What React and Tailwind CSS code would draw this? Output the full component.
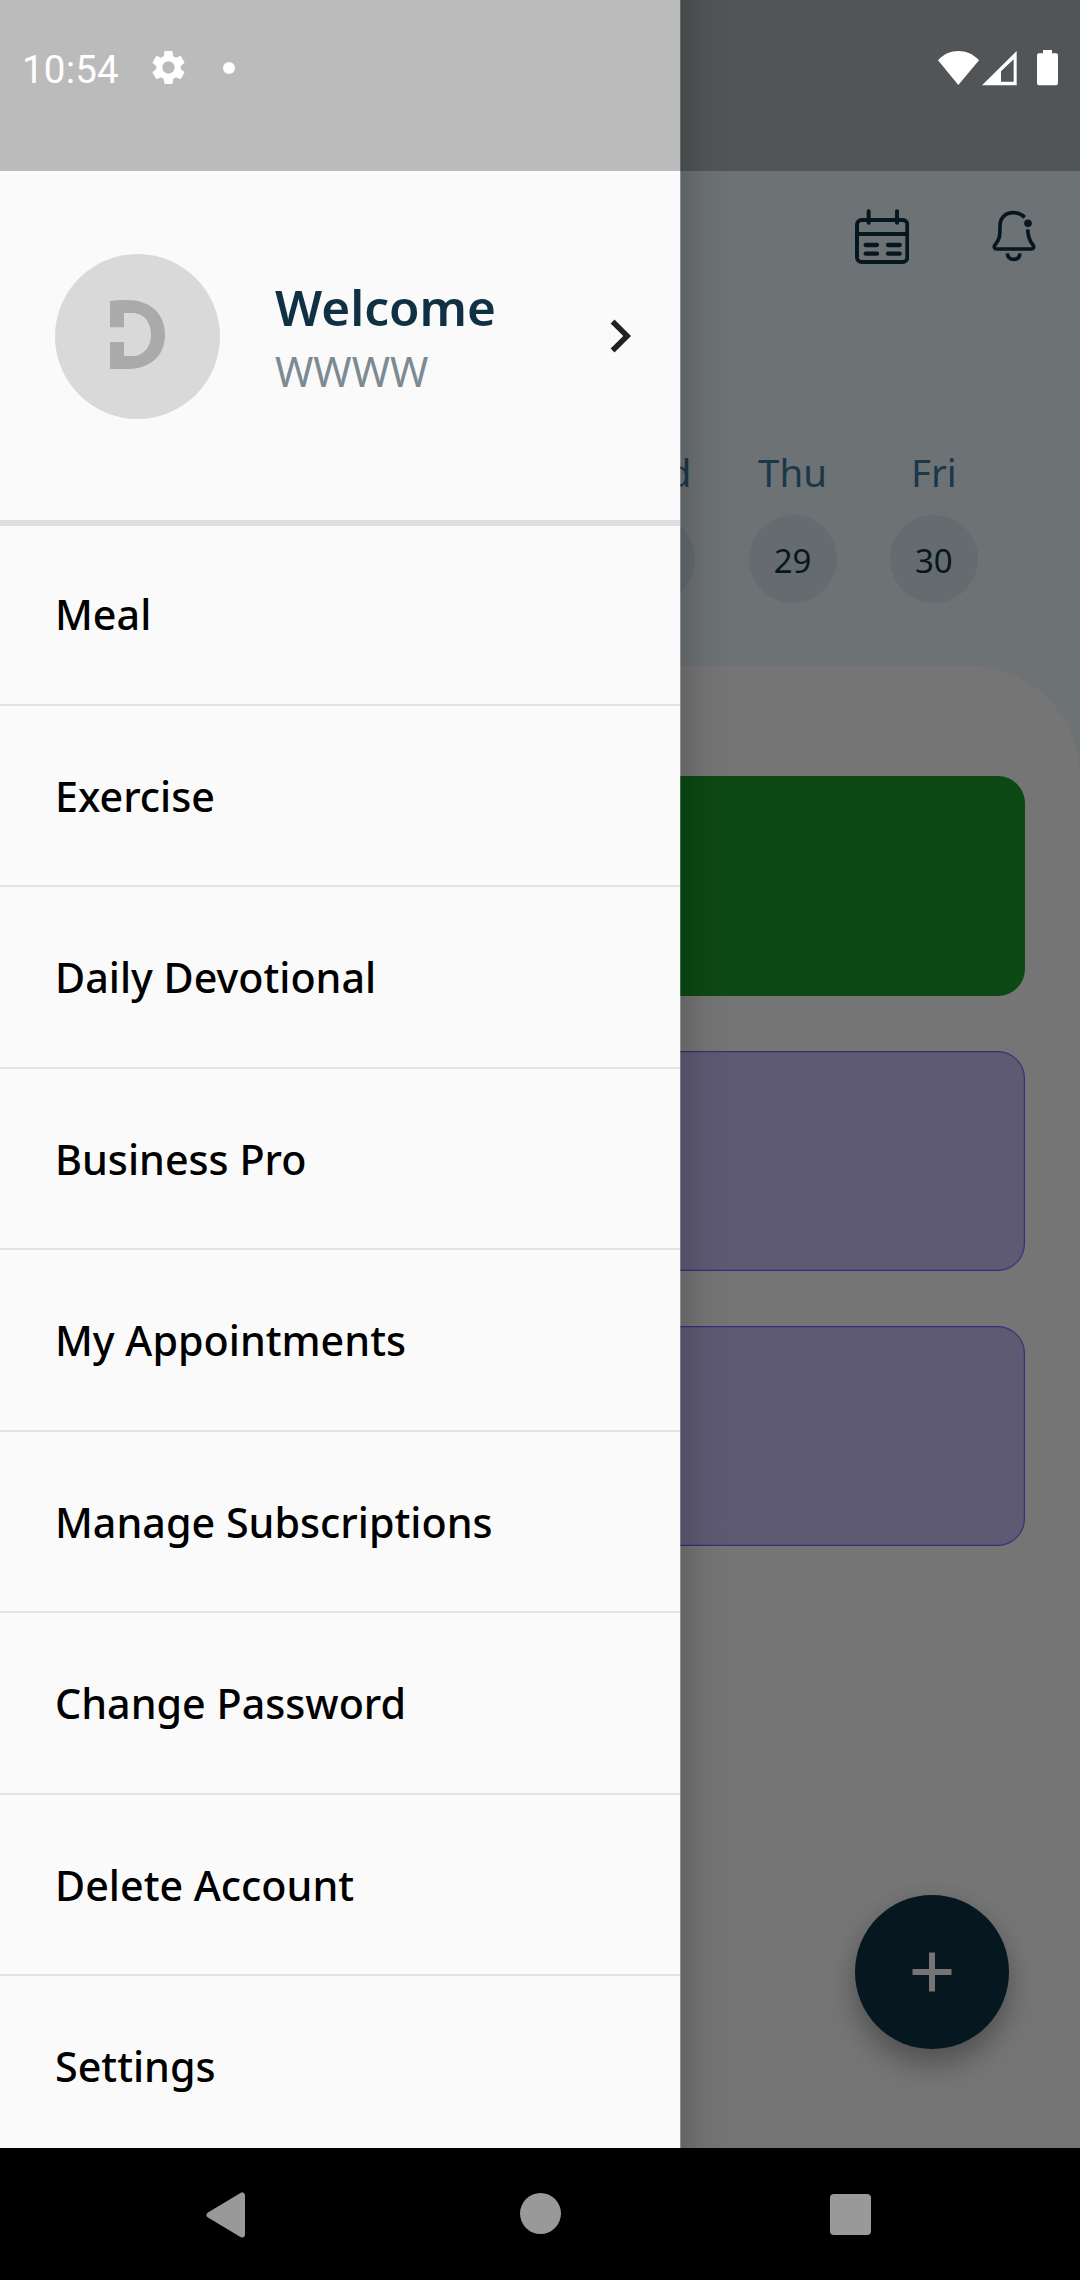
import { MdSettings } from "react-icons/md";

const items = [
  "Meal",
  "Exercise",
  "Daily Devotional",
  "Business Pro",
  "My Appointments",
  "Manage Subscriptions",
  "Change Password",
  "Delete Account",
  "Settings",
];

const days = [
  { name: "Wed", date: "28" },
  { name: "Thu", date: "29" },
  { name: "Fri", date: "30" },
];

function CalendarIcon() {
  return (
    <svg className="h-[56px] w-[54px]" viewBox="0 0 162 168" fill="none" stroke="#07171f" strokeWidth="12" strokeLinecap="round">
      <rect x="6" y="33" width="151" height="126" rx="14" />
      <path d="M6 75H157M41 7v34M126 7v34" />
      <path d="M32 108H66M99 108H134M32 134H66M99 134H134" strokeWidth="13" />
    </svg>
  );
}

function BellIcon() {
  return (
    <svg className="h-[54px] w-[44px]" viewBox="0 0 132 162" fill="none" stroke="#07171f" strokeWidth="11" strokeLinecap="butt" strokeLinejoin="round">
      <path d="M98 25C88 15 76 11 64 11C40 11 24 27 24 50C24 85 22 92 9 108C5 113 7 120 14 120H118C125 120 127 113 123 108C111 94 108 80 107 61" />
      <path d="M46 133C47 145 55 151 65 151C75 151 83 145 84 133" />
      <circle cx="108" cy="43" r="11.5" fill="#07171f" stroke="none" />
    </svg>
  );
}

function StatusBar() {
  return (
    <div className="absolute inset-x-0 top-0 z-20 flex h-[171px] items-start bg-black/25 text-white">
      <div className="flex h-[135px] w-full items-center pl-[22px] pr-[22px]">
        <span className="font-[Roboto,sans-serif] text-[38.5px] leading-[46px] pt-[5px] tracking-[0.2px]">10:54</span>
        <MdSettings className="ml-[29px] size-[41px]" />
        <span className="ml-[34px] size-[12px] rounded-full bg-white" />
        <svg className="ml-auto h-[36px] w-[120px]" viewBox="0 0 360 108" fill="#fff">
          <path d="M0 31C34-6 88-6 123 31L61 105Z" />
          <path fillRule="evenodd" d="M132 106L236 3V106ZM189 64V95H227V28Z" />
          <path d="M315 0h27v10h12q6 0 6 6v84q0 6-6 6h-51q-6 0-6-6V16q0-6 6-6h12Z" />
        </svg>
      </div>
    </div>
  );
}

function HomeScreen() {
  return (
    <main className="flex h-[2148px] flex-col bg-[#6d7275]">
      <div className="flex h-[495px] flex-col pt-[209px]">
        <div className="flex justify-end gap-[83px] pr-[44px]">
          <CalendarIcon />
          <BellIcon />
        </div>
        <div className="mt-[181px] flex justify-end pr-[75.5px]">
          {days.map((d) => (
            <div key={d.name} className="flex w-[141.3px] flex-col items-center">
              <span className="text-[38.5px] leading-[52px] text-[#1b384b]">{d.name}</span>
              <span className="mt-[17px] flex size-[88px] items-center justify-center rounded-full bg-[#666b6f] pt-[3px] text-[33px] text-[#07171f]">
                {d.date}
              </span>
            </div>
          ))}
        </div>
      </div>
      <div className="mt-[171px] flex flex-1 flex-col gap-[55px] rounded-tr-[110px] bg-[#757575] px-[55px] pt-[110px]">
        <div className="h-[220px] rounded-[27px] bg-[#0c4914]" />
        <div className="h-[220px] rounded-[27px] border border-[#3b2b7c] bg-[#5f5a74] shadow-[inset_0_0_0_0.5px_#4c4379]" />
        <div className="h-[220px] rounded-[27px] border border-[#3b2b7c] bg-[#5f5a74] shadow-[inset_0_0_0_0.5px_#4c4379]" />
        <div className="mr-[16.5px] mt-[293.5px] flex size-[154px] items-center justify-center self-end rounded-full bg-[#07171f] shadow-[0_17px_28px_0_rgba(0,0,0,0.25),0_4px_22px_0_rgba(0,0,0,0.08)]">
          <svg className="size-[40px]" viewBox="0 0 40 40" stroke="#757575" strokeWidth="6">
            <path d="M20 0.5V39.5M0.5 20H39.5" />
          </svg>
        </div>
      </div>
    </main>
  );
}

function Drawer() {
  return (
    <aside className="absolute left-0 top-0 z-10 flex h-[2148px] w-[1080px] overflow-hidden">
      <div className="flex w-[680px] shrink-0 flex-col bg-[#fafafa]">
        <div className="flex h-[520px] shrink-0 items-start pl-[55px] pt-[254px]">
          <svg className="size-[165px] shrink-0" viewBox="165 102 495 495">
            <circle cx="412.500" cy="349.500" r="247.500" fill="#d9d9d9" />
            <path
              fill="#aaaaaa"
              d="M330 243Q355 240 380 240C450 240 495 280 495 344C495 408 450 447 380 447H330V366H372V408H397C431 408 453 380 453 344C453 306 431 279 397 279H372V322H330Z"
            />
          </svg>
          <div className="ml-[55px] flex flex-col pt-[20px]">
            <span className="text-[49.5px] font-semibold leading-[67px] text-[#103044]">Welcome</span>
            <span className="mt-[2px] text-[41.25px] leading-[56px] text-[#7c8a92]">WWWW</span>
          </div>
          <svg className="ml-auto mr-[27px] mt-[49px] size-[66px]" viewBox="0 0 24 24" fill="#212121">
            <path d="M10 6L8.590 7.410 13.170 12l-4.580 4.590L10 18l6-6z" />
          </svg>
        </div>
        <div className="relative h-[6px] shrink-0 bg-[#dddddd]" />
        <nav className="-mt-[1.800px] flex flex-col">
          {items.map((item) => (
            <div key={item} className="flex shrink-0 flex-col">
              <div className="flex h-[179.5px] items-center pl-[55px] pt-px text-[41.25px] font-medium leading-[56px] text-black">
                {item}
              </div>
              <div className="h-[2px] bg-[#e3e3e3]" />
            </div>
          ))}
        </nav>
      </div>
      <div className="w-px bg-white/20" />
      <div className="w-[50px] bg-gradient-to-r from-black/14 via-black/4 to-transparent" />
    </aside>
  );
}

function NavigationBar() {
  return (
    <div className="flex h-[132px] items-start justify-between bg-black pl-[205px] pr-[209px] pt-[44px]">
      <svg className="h-[46px] w-[41px]" viewBox="0 0 41 46" fill="#999" stroke="#999" strokeWidth="6" strokeLinejoin="round">
        <path d="M4.500 23L37 3.500V42.500Z" />
      </svg>
      <span className="ml-[4px] mt-px size-[41px] rounded-full bg-[#999]" />
      <span className="mt-[2px] size-[41px] rounded-[4px] bg-[#999]" />
    </div>
  );
}

export default function App() {
  return (
    <div className="relative h-[2280px] w-[1080px] overflow-hidden bg-black font-['Noto_Sans',sans-serif]">
      <HomeScreen />
      <Drawer />
      <StatusBar />
      <NavigationBar />
    </div>
  );
}
